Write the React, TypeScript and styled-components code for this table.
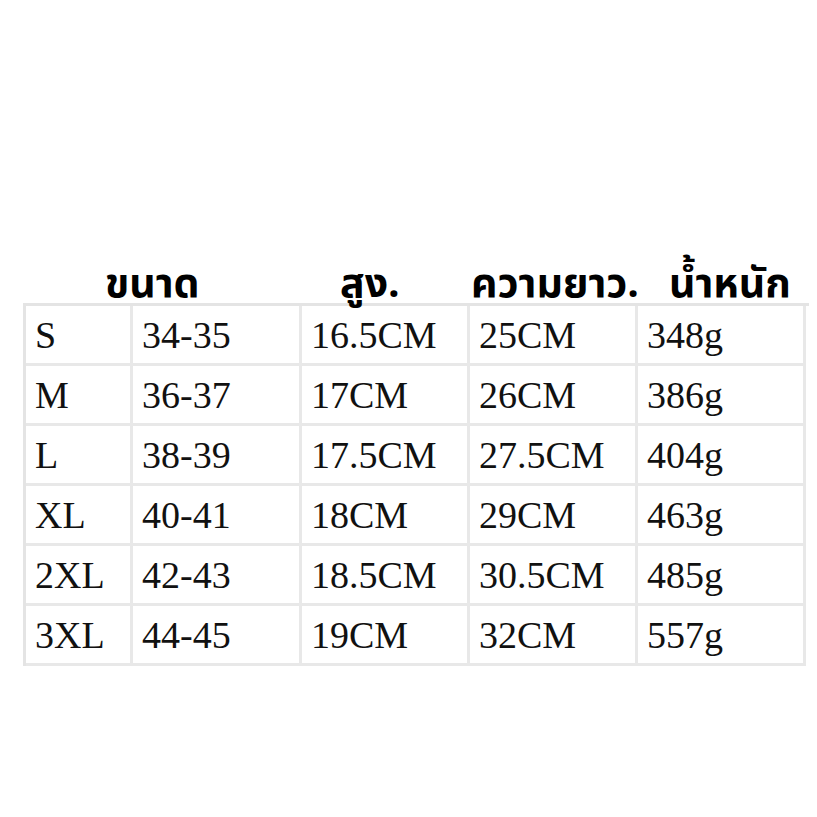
import styled, { createGlobalStyle } from "styled-components";

const GlobalStyle = createGlobalStyle`
  html, body {
    margin: 0;
    padding: 0;
    background: #ffffff;
  }
`;

const Page = styled.div`
  width: 817px;
  height: 817px;
  box-sizing: border-box;
  padding-top: 258px;
  padding-left: 23px;
  background: #ffffff;
`;

const COLUMNS = "107px 169px 168px 168px 168px";

const HeaderRow = styled.div`
  display: grid;
  grid-template-columns: ${COLUMNS};
  height: 45px;
  padding-left: 3px;
  align-items: end;
`;

interface HeaderCellProps {
  $indent: number;
  $span?: number;
}

const HeaderCell = styled.div<HeaderCellProps>`
  grid-column: span ${(p) => p.$span ?? 1};
  padding-left: ${(p) => p.$indent}px;
  font-family: "Noto Sans Thai", "Noto Sans", "DejaVu Sans", sans-serif;
  font-weight: 700;
  font-size: 41px;
  line-height: 38px;
  color: #000000;
  white-space: nowrap;
`;

const Table = styled.div`
  display: grid;
  grid-template-columns: ${COLUMNS};
  width: 783px;
  border-left: 3px solid #e4e4e4;
  border-top: 3px solid #e4e4e4;
`;

const Cell = styled.div`
  height: 57px;
  border-right: 3px solid #e8e8e8;
  border-bottom: 3px solid #e8e8e8;
  padding-left: 9px;
  display: flex;
  align-items: center;
  font-family: "Liberation Serif", "Times New Roman", serif;
  font-size: 38px;
  color: #111111;
  white-space: nowrap;
  overflow: hidden;
`;

const rows = [
  ["S", "34-35", "16.5CM", "25CM", "348g"],
  ["M", "36-37", "17CM", "26CM", "386g"],
  ["L", "38-39", "17.5CM", "27.5CM", "404g"],
  ["XL", "40-41", "18CM", "29CM", "463g"],
  ["2XL", "42-43", "18.5CM", "30.5CM", "485g"],
  ["3XL", "44-45", "19CM", "32CM", "557g"],
];

export default function App() {
  return (
    <>
      <GlobalStyle />
      <Page>
        <HeaderRow>
          <HeaderCell $span={2} $indent={79}>ขนาด</HeaderCell>
          <HeaderCell $indent={38}>สูง.</HeaderCell>
          <HeaderCell $indent={1}>ความยาว.</HeaderCell>
          <HeaderCell $indent={31}>น้ำหนัก</HeaderCell>
        </HeaderRow>
        <Table>
          {rows.map((row) =>
            row.map((value, i) => <Cell key={row[0] + i}>{value}</Cell>)
          )}
        </Table>
      </Page>
    </>
  );
}
